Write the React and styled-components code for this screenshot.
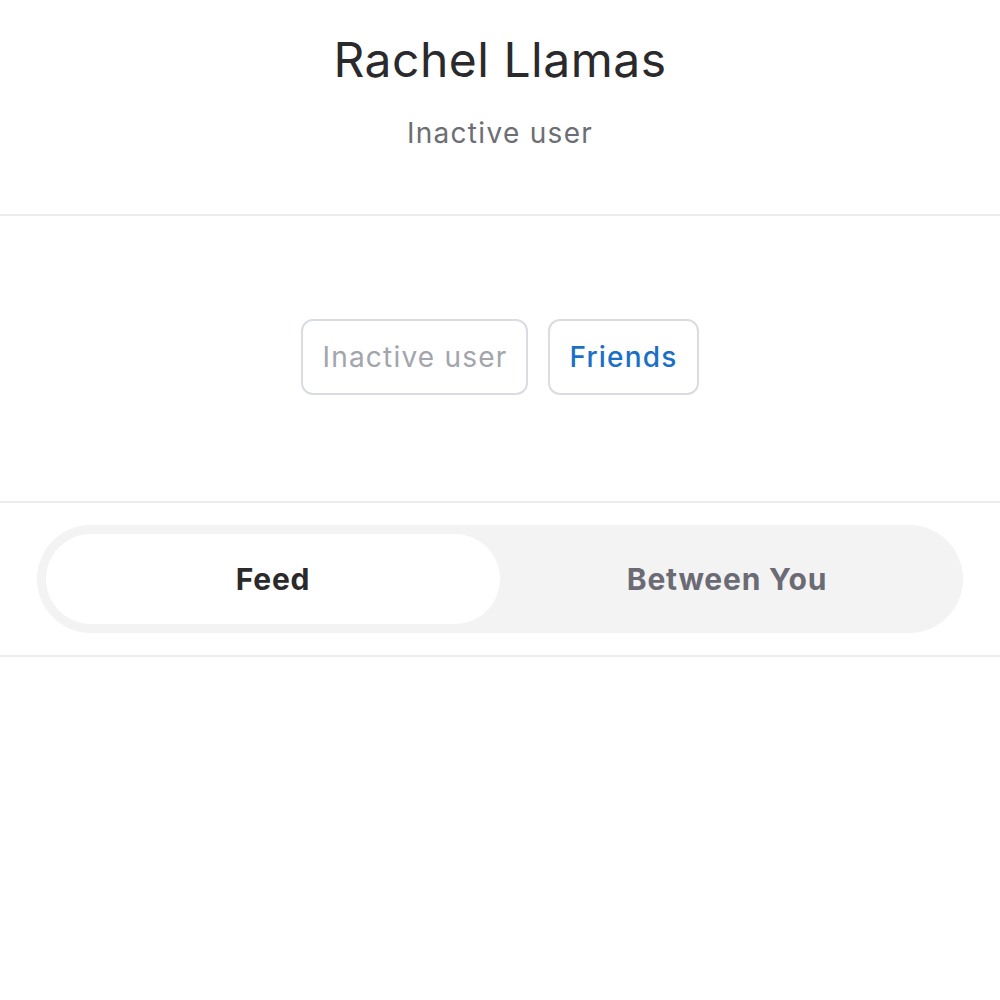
import React, { useState } from 'react'
import styled, { createGlobalStyle } from 'styled-components'

const GlobalStyle = createGlobalStyle`
  html, body {
    margin: 0;
    padding: 0;
    background: #ffffff;
  }
  body {
    font-family: Inter, "Liberation Sans", Arial, sans-serif;
    -webkit-font-smoothing: antialiased;
  }
`

const Page = styled.div`
  width: 1000px;
  min-height: 1000px;
  background: #fff;
`

const Header = styled.header`
  display: flex;
  flex-direction: column;
  align-items: center;
  padding-top: 29px;
  height: 216px;
  box-sizing: border-box;
  border-bottom: 2px solid #ececee;
`

const Name = styled.h1`
  margin: 0;
  font-size: 48px;
  font-weight: 400;
  line-height: 62px;
  color: #2a2a2d;
  letter-spacing: 0.5px;
`

const Status = styled.div`
  margin-top: 22px;
  font-size: 28px;
  line-height: 40px;
  letter-spacing: 1.3px;
  color: #6c6e75;
`

const Actions = styled.section`
  display: flex;
  justify-content: center;
  align-items: center;
  gap: 20px;
  height: 287px;
  box-sizing: border-box;
  border-bottom: 2px solid #ececee;
  padding-bottom: 4px;
`

const Chip = styled.button`
  height: 76px;
  padding: 0 19px;
  border: 2px solid #d9dce2;
  border-radius: 12px;
  background: #fff;
  font-family: inherit;
  font-size: 28px;
  letter-spacing: 1.2px;
  font-weight: ${p => (p.$active ? 500 : 400)};
  color: ${p => (p.$active ? '#1b6fc6' : '#a2a5ac')};
  cursor: pointer;
`

const TabBar = styled.section`
  padding: 22px 37px;
  border-bottom: 2px solid #ececee;
`

const Segmented = styled.div`
  display: grid;
  grid-template-columns: 1fr 1fr;
  height: 108px;
  padding: 9px;
  box-sizing: border-box;
  border-radius: 54px;
  background: #f3f3f4;
`

const Segment = styled.button`
  border: none;
  border-radius: 45px;
  background: ${p => (p.$active ? '#ffffff' : 'transparent')};
  font-family: inherit;
  font-size: 30px;
  letter-spacing: 0.8px;
  font-weight: 700;
  color: ${p => (p.$active ? '#2a2a2d' : '#6b6b75')};
  cursor: pointer;
`

export default function App() {
  const [tab, setTab] = useState('feed')
  return (
    <Page>
      <GlobalStyle />
      <Header>
        <Name>Rachel Llamas</Name>
        <Status>Inactive user</Status>
      </Header>
      <Actions>
        <Chip>Inactive user</Chip>
        <Chip $active>Friends</Chip>
      </Actions>
      <TabBar>
        <Segmented>
          <Segment $active={tab === 'feed'} onClick={() => setTab('feed')}>Feed</Segment>
          <Segment $active={tab === 'between'} onClick={() => setTab('between')}>Between You</Segment>
        </Segmented>
      </TabBar>
    </Page>
  )
}
